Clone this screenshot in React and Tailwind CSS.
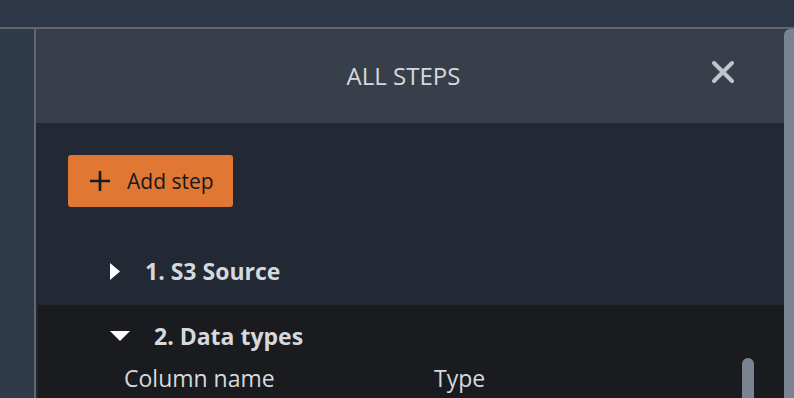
const FONT = { fontFamily: '"Open Sans", "Noto Sans", sans-serif' };

function CloseIcon() {
  return (
    <svg width="24" height="24" viewBox="0 0 24 24" className="block">
      <path
        d="M3 3 L21 21 M21 3 L3 21"
        stroke="#c1c4c9"
        strokeWidth="4"
        strokeLinecap="round"
        fill="none"
      />
    </svg>
  );
}

function PlusIcon() {
  return (
    <svg width="22" height="22" viewBox="0 0 22 22" className="block">
      <path d="M11 1 V21 M1 11 H21" stroke="#16191f" strokeWidth="2.6" fill="none" />
    </svg>
  );
}

function CaretRight() {
  return (
    <svg width="10" height="17" viewBox="0 0 10 17" className="block">
      <path d="M0 0 L10 8.5 L0 17 Z" fill="#ffffff" />
    </svg>
  );
}

function CaretDown() {
  return (
    <svg width="20" height="10" viewBox="0 0 20 10" className="block">
      <path d="M0 0 L20 0 L10 10 Z" fill="#ffffff" />
    </svg>
  );
}

export default function App() {
  return (
    <div
      className="flex h-[398px] w-[794px] flex-col overflow-hidden bg-[#2f3848]"
      style={FONT}
    >
      <div className="h-[29px] shrink-0 border-b-2 border-[#64666a] bg-[#2e3747]" />

      <div className="flex min-h-0 flex-1">
        <div className="w-[36px] shrink-0 border-r-2 border-[#64666a] bg-[#2f3a4a]" />

        <div className="flex min-w-0 flex-1 flex-col bg-[#222834]">
          <header className="relative flex h-[94px] shrink-0 items-center justify-center bg-[#393f4a] pr-[13px]">
            <span className="text-[24px] font-medium leading-none text-[#d5d9de]">ALL STEPS</span>
            <button className="absolute right-[49px] top-[31px]">
              <CloseIcon />
            </button>
          </header>

          <div className="flex flex-1 flex-col">
            <div className="pl-[32px] pt-[32px]">
              <button className="flex h-[52px] w-[165px] items-center gap-[16px] rounded-[3px] bg-[#e07733] pl-[21px] text-[21px] font-medium text-[#16191f]">
                <PlusIcon />
                <span className="leading-none">Add step</span>
              </button>
            </div>

            <div className="mt-[47px] flex h-[34px] items-center pl-[74px]">
              <CaretRight />
              <span className="ml-[25px] text-[23px] font-bold leading-none text-[#d5d9de]">
                1. S3 Source
              </span>
            </div>

            <div className="ml-[2px] mt-[17px] flex flex-1 bg-[#1a1b1f]">
              <div className="flex flex-1 flex-col">
                <div className="mt-[16px] flex h-[30px] items-center pl-[72px]">
                  <CaretDown />
                  <span className="ml-[24px] text-[23px] font-bold leading-none text-[#d5d9de]">
                    2. Data types
                  </span>
                </div>
                <div className="mt-[16px] flex items-center pl-[86px] text-[23px] font-medium leading-none text-[#d5d9de]">
                  <span className="w-[310px]">Column name</span>
                  <span>Type</span>
                </div>
              </div>
              <div className="mr-[30px] mt-[53px] w-[12px] rounded-t-[6px] bg-[#7a8391]" />
            </div>
          </div>
        </div>

        <div className="w-[10px] shrink-0 rounded-tl-[6px] bg-[#7a8391]" />
      </div>
    </div>
  );
}
